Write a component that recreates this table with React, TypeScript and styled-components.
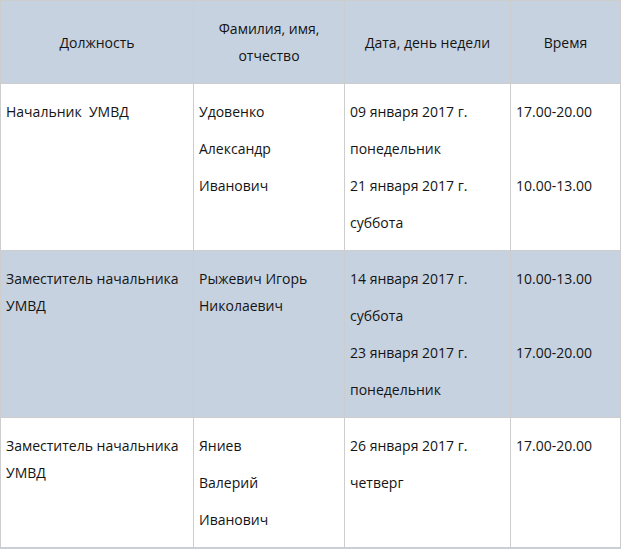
import React from 'react'
import styled, { createGlobalStyle } from 'styled-components'

const GlobalStyle = createGlobalStyle`
    html, body {
        margin: 0;
        padding: 0;
        background: #ffffff;
        overflow: hidden;
    }
    body {
        font-family: "Open Sans", "Noto Sans", sans-serif;
        color: #141414;
    }
`

const Table = styled.table`
    width: 620px;
    border-collapse: collapse;
    table-layout: fixed;
    font-size: 14px;
`

const Row = styled.tr<{ $shaded?: boolean }>`
    background-color: ${p => (p.$shaded ? '#c7d2e1' : '#ffffff')};
`

const HeadCell = styled.th`
    border: 1px solid #cdcdcd;
    padding: 4px 5px;
    font-weight: normal;
    text-align: center;
    vertical-align: middle;
`

const Cell = styled.td`
    border: 1px solid #cdcdcd;
    padding: 4px 5px;
    vertical-align: top;
    text-align: left;
`

// the next row of the schedule, only its top edge shows in the frame
const EmptyCell = styled.td`
    border: 1px solid #cdcdcd;
    height: 40px;
`

const Line = styled.p`
    margin: 10px 0;
    line-height: 27px;
`

interface IRow {
    post: string
    name: string[]
    dates: string[]
    times: string[]
}

const rows: IRow[] = [
    {
        post: 'Начальник\u00a0 УМВД',
        name: ['Удовенко', 'Александр', 'Иванович'],
        dates: ['09 января 2017 г.', 'понедельник', '21 января 2017 г.', 'суббота'],
        times: ['17.00-20.00', '', '10.00-13.00'],
    },
    {
        post: 'Заместитель начальника УМВД',
        name: ['Рыжевич Игорь Николаевич'],
        dates: ['14 января 2017 г.', 'суббота', '23 января 2017 г.', 'понедельник'],
        times: ['10.00-13.00', '', '17.00-20.00'],
    },
    {
        post: 'Заместитель начальника УМВД',
        name: ['Яниев', 'Валерий', 'Иванович'],
        dates: ['26 января 2017 г.', 'четверг'],
        times: ['17.00-20.00'],
    },
]

const lines = (items: string[]) =>
    items.map((t, i) => <Line key={i}>{t || '\u00a0'}</Line>)

export default function App() {
    return (
        <>
            <GlobalStyle />
            <Table>
                <colgroup>
                    <col style={{ width: 193 }} />
                    <col style={{ width: 151 }} />
                    <col style={{ width: 166 }} />
                    <col style={{ width: 110 }} />
                </colgroup>
                <thead>
                    <Row $shaded>
                        <HeadCell><Line>Должность</Line></HeadCell>
                        <HeadCell><Line>Фамилия, имя, отчество</Line></HeadCell>
                        <HeadCell><Line>Дата, день недели</Line></HeadCell>
                        <HeadCell><Line>Время</Line></HeadCell>
                    </Row>
                </thead>
                <tbody>
                    {rows.map((r, i) => (
                        <Row key={i} $shaded={i % 2 === 1}>
                            <Cell><Line>{r.post}</Line></Cell>
                            <Cell>{lines(r.name)}</Cell>
                            <Cell>{lines(r.dates)}</Cell>
                            <Cell>{lines(r.times)}</Cell>
                        </Row>
                    ))}
                    <Row $shaded>
                        <EmptyCell />
                        <EmptyCell />
                        <EmptyCell />
                        <EmptyCell />
                    </Row>
                </tbody>
            </Table>
        </>
    )
}
